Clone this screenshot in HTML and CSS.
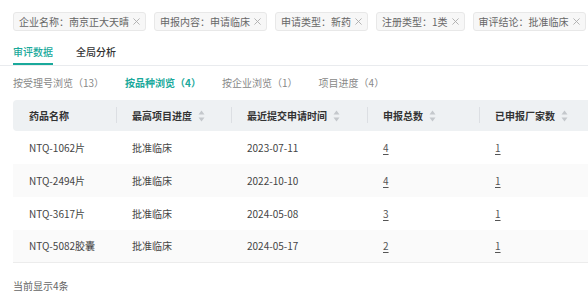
FILE: index.html
```html
<!DOCTYPE html>
<html lang="zh">
<head>
<meta charset="utf-8">
<link rel="stylesheet" href="styles.css">
</head>
<body>
<div class="page">
  <div class="tags">
    <span class="tag">企业名称：南京正大天晴<svg class="x" viewBox="0 0 8 8"><path d="M0.5 0.5L7.5 7.5M7.5 0.5L0.5 7.5"/></svg></span>
    <span class="tag">申报内容：申请临床<svg class="x" viewBox="0 0 8 8"><path d="M0.5 0.5L7.5 7.5M7.5 0.5L0.5 7.5"/></svg></span>
    <span class="tag">申请类型：新药<svg class="x" viewBox="0 0 8 8"><path d="M0.5 0.5L7.5 7.5M7.5 0.5L0.5 7.5"/></svg></span>
    <span class="tag">注册类型：1类<svg class="x" viewBox="0 0 8 8"><path d="M0.5 0.5L7.5 7.5M7.5 0.5L0.5 7.5"/></svg></span>
    <span class="tag">审评结论：批准临床<svg class="x" viewBox="0 0 8 8"><path d="M0.5 0.5L7.5 7.5M7.5 0.5L0.5 7.5"/></svg></span>
  </div>

  <div class="tabs">
    <span class="tab active">审评数据</span>
    <span class="tab">全局分析</span>
  </div>

  <div class="subtabs">
    <span class="subtab">按受理号浏览（13）</span>
    <span class="subtab active">按品种浏览（4）</span>
    <span class="subtab">按企业浏览（1）</span>
    <span class="subtab">项目进度（4）</span>
  </div>

  <div class="table-wrap">
    <table class="grid">
      <colgroup>
        <col class="c1"><col class="c2"><col class="c3"><col class="c4"><col class="c5">
      </colgroup>
      <thead>
        <tr>
          <th>药品名称</th>
          <th><span class="th-in">最高项目进度<svg class="sort" viewBox="0 0 7 12"><path d="M3.5 0.5L6.5 4.5H0.5Z"/><path d="M0.5 7.5H6.5L3.5 11.5Z"/></svg></span></th>
          <th><span class="th-in">最近提交申请时间<svg class="sort" viewBox="0 0 7 12"><path d="M3.5 0.5L6.5 4.5H0.5Z"/><path d="M0.5 7.5H6.5L3.5 11.5Z"/></svg></span></th>
          <th><span class="th-in">申报总数<svg class="sort" viewBox="0 0 7 12"><path d="M3.5 0.5L6.5 4.5H0.5Z"/><path d="M0.5 7.5H6.5L3.5 11.5Z"/></svg></span></th>
          <th><span class="th-in">已申报厂家数<svg class="sort" viewBox="0 0 7 12"><path d="M3.5 0.5L6.5 4.5H0.5Z"/><path d="M0.5 7.5H6.5L3.5 11.5Z"/></svg></span></th>
        </tr>
      </thead>
      <tbody>
        <tr><td>NTQ-1062片</td><td>批准临床</td><td>2023-07-11</td><td><a class="num">4</a></td><td><a class="num">1</a></td></tr>
        <tr class="alt"><td>NTQ-2494片</td><td>批准临床</td><td>2022-10-10</td><td><a class="num">4</a></td><td><a class="num">1</a></td></tr>
        <tr><td>NTQ-3617片</td><td>批准临床</td><td>2024-05-08</td><td><a class="num">3</a></td><td><a class="num">1</a></td></tr>
        <tr class="alt last"><td>NTQ-5082胶囊</td><td>批准临床</td><td>2024-05-17</td><td><a class="num">2</a></td><td><a class="num">1</a></td></tr>
      </tbody>
    </table>
  </div>

  <div class="footer">当前显示4条</div>
</div>
</body>
</html>
```

FILE: styles.css
```css
html, body {
  margin: 0;
  padding: 0;
  background: #fff;
  overflow: hidden;
}

body {
  font-family: "Noto Sans CJK SC", "Noto Sans", sans-serif;
  font-size: 10px;
  color: #333;
}

.page {
  padding-top: 12px;
}

.tags {
  display: flex;
  gap: 8px;
  padding-left: 13px;
}

.tag {
  display: inline-flex;
  align-items: center;
  height: 17px;
  line-height: 17px;
  padding: 0 5px 0 5px;
  border: 1px solid #e8e8e8;
  border-radius: 3px;
  background: #f7f7f7;
  color: #666;
  white-space: nowrap;
}

.tag .x {
  width: 7px;
  height: 7px;
  margin-left: 4px;
  fill: none;
  stroke: #aaa;
  stroke-width: 1;
}

.tabs {
  display: flex;
  gap: 23px;
  margin-top: 14px;
  padding-left: 13px;
  border-bottom: 1px solid #e9ebee;
}

.tab {
  line-height: 14px;
  padding-bottom: 4px;
  border-bottom: 2px solid transparent;
  color: #333;
  font-weight: 500;
}

.tab.active {
  color: #1aa99b;
  border-bottom-color: #1aa99b;
}

.subtabs {
  display: flex;
  gap: 21px;
  margin-top: 10px;
  padding-left: 13px;
}

.subtab {
  line-height: 14px;
  color: #888;
}

.subtab.active {
  color: #1aa99b;
  font-weight: 700;
}

.table-wrap {
  margin-top: 10px;
  margin-left: 13px;
  overflow: hidden;
}

.grid {
  width: 640px;
  table-layout: fixed;
  border-collapse: separate;
  border-spacing: 0;
}

.grid .c1 { width: 103px; }
.grid .c2 { width: 115px; }
.grid .c3 { width: 136px; }
.grid .c4 { width: 112px; }

.grid th {
  position: relative;
  height: 31px;
  padding: 0 0 0 16px;
  background: #eef1f3;
  text-align: left;
  font-weight: 700;
  color: #333;
  line-height: 14px;
  white-space: nowrap;
}

.grid th:first-child {
  border-radius: 4px 0 0 4px;
}

.grid th + th::before {
  content: "";
  position: absolute;
  left: 0;
  top: 7px;
  width: 1px;
  height: 16px;
  background: #dcdfe3;
}

.th-in {
  display: inline-flex;
  align-items: center;
}

.sort {
  width: 7px;
  height: 12px;
  margin-left: 6px;
  fill: #c4c8cc;
}

.grid td {
  height: 33px;
  padding: 0 0 0 16px;
  color: #444;
  line-height: 14px;
  white-space: nowrap;
}

.grid tr.alt td {
  background: #fafafa;
}

.grid tr.last td {
  border-bottom: 1px solid #ececec;
  height: 32px;
}

.num {
  color: #555;
  text-decoration: underline;
  text-underline-offset: 2px;
}

.footer {
  margin-top: 16px;
  padding-left: 13px;
  line-height: 14px;
  color: #666;
}
```
